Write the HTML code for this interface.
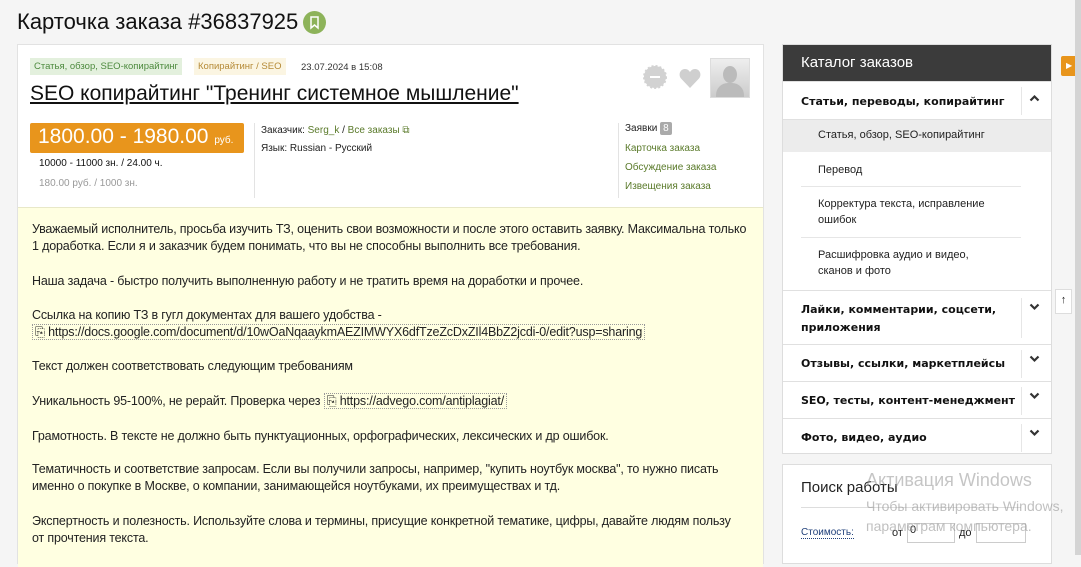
<!DOCTYPE html>
<html><head><meta charset="utf-8"><style>
*{margin:0;padding:0;box-sizing:border-box}
body{width:1081px;height:555px;overflow:hidden;background:#f5f5f5;font-family:"Liberation Sans",sans-serif;color:#222;position:relative}
.a{position:absolute;white-space:nowrap}
h1{position:absolute;left:17px;top:9px;font-size:22px;font-weight:normal;color:#111}
.card{position:absolute;left:17px;top:44px;width:747px;height:520px;background:#fff;border:1px solid #e2e2e2}
.body{position:absolute;left:0;top:162px;width:745px;height:360px;background:#ffffe1;border-top:1px solid #e8e8c8}
.body p{position:absolute;left:14px;font-size:12.5px;line-height:17px;white-space:nowrap;color:#222;letter-spacing:-0.17px}
.lnk{border:1px dotted #999;padding:0 2px}
.side{position:absolute;left:782px;top:44px;width:270px;height:410px;background:#fff;border:1px solid #ddd}
.sh{height:36px;background:#3b3b3b;color:#fff;font-size:15px;padding:9px 0 0 18px}
.row{position:absolute;left:0;width:268px;border-top:1px solid #e0e0e0;font-family:"DejaVu Sans",sans-serif;font-weight:bold;font-size:11px;color:#111}
.row span{position:absolute;left:18px}
.chev{position:absolute;left:246px}
.vs{position:absolute;left:238px;width:1px;background:#e6e6e6}
.sub{position:absolute;left:35px;font-size:11px;line-height:16px;color:#222}
</style></head><body>
<h1>Карточка заказа #36837925</h1>
<div class="a" style="left:303px;top:11px;width:23px;height:23px;border-radius:50%;background:#8db35a"><svg width="23" height="23" viewBox="0 0 23 23" style="position:absolute;left:0;top:0"><path d="M8 6h7v11l-3.5-3-3.5 3z" fill="none" stroke="#fff" stroke-width="1.5"/></svg></div>
<div class="card">
 <div class="a" style="left:12px;top:13px;background:#e3f0dd;color:#4d8a3e;font-size:9.5px;padding:3px 4px;height:17px">Статья, обзор, SEO-копирайтинг</div>
 <div class="a" style="left:176px;top:13px;background:#fbf5e2;color:#b58a36;font-size:9.5px;padding:3px 4px;height:17px">Копирайтинг / SEO</div>
 <div class="a" style="left:283px;top:17px;font-size:9.5px;color:#333">23.07.2024 в 15:08</div>
 <div class="a" style="left:12px;top:37px;font-size:21px;color:#111;text-decoration:underline">SEO копирайтинг "Тренинг системное мышление"</div>
 <svg class="a" style="left:625px;top:20px" width="24" height="24" viewBox="0 0 24 24"><circle cx="12" cy="12" r="11" fill="#d2d2d2" stroke="#d2d2d2" stroke-width="2" stroke-dasharray="2 2"/><rect x="7" y="11" width="10" height="2" fill="#fff"/></svg>
 <svg class="a" style="left:661px;top:24px" width="22" height="19" viewBox="0 0 22 19"><path d="M11 19L2 9.5C-1 6 1 0 6 0c2.5 0 4 1.5 5 3 1-1.5 2.5-3 5-3 5 0 7 6 4 9.5z" fill="#cfcfcf"/></svg>
 <div class="a" style="left:692px;top:13px;width:40px;height:40px;border:1px solid #ddd;background:linear-gradient(#eee,#ccc)"><div style="position:absolute;left:12px;top:7px;width:14px;height:17px;border-radius:50%;background:#bbb"></div><div style="position:absolute;left:5px;top:24px;width:28px;height:14px;border-radius:12px 12px 0 0;background:#bbb"></div></div>
 <div class="a" style="left:12px;top:78px;width:214px;height:30px;background:#e8951c;color:#fff;font-size:21px;padding:2px 0 0 8px;border-radius:2px">1800.00 - 1980.00 <span style="font-size:10px">руб.</span></div>
 <div class="a" style="left:21px;top:113px;font-size:10px;color:#111">10000 - 11000 зн. / 24.00 ч.</div>
 <div class="a" style="left:21px;top:133px;font-size:10px;color:#999">180.00 руб. / 1000 зн.</div>
 <div class="a" style="left:236px;top:78px;width:1px;height:75px;background:#e3e3e3"></div>
 <div class="a" style="left:243px;top:80px;font-size:10px;color:#222">Заказчик: <span style="color:#5a7a2a">Serg_k</span> / <span style="color:#5a7a2a">Все заказы ⧉</span></div>
 <div class="a" style="left:243px;top:98px;font-size:10px;color:#222">Язык: Russian - Русский</div>
 <div class="a" style="left:600px;top:78px;width:1px;height:75px;background:#e3e3e3"></div>
 <div class="a" style="left:607px;top:78px;font-size:10px;color:#222">Заявки <span style="background:#aaa;color:#fff;padding:1px 3px;border-radius:2px">8</span></div>
 <div class="a" style="left:607px;top:98px;font-size:10px;color:#5a7a2a">Карточка заказа</div>
 <div class="a" style="left:607px;top:117px;font-size:10px;color:#5a7a2a">Обсуждение заказа</div>
 <div class="a" style="left:607px;top:136px;font-size:10px;color:#5a7a2a">Извещения заказа</div>
 <div class="body">
  <p style="top:13px">Уважаемый исполнитель, просьба изучить ТЗ, оценить свои возможности и после этого оставить заявку. Максимальна только<br>1 доработка. Если я и заказчик будем понимать, что вы не способны выполнить все требования.</p>
  <p style="top:65px">Наша задача - быстро получить выполненную работу и не тратить время на доработки и прочее.</p>
  <p style="top:99px">Ссылка на копию ТЗ в гугл документах для вашего удобства -<br><span class="lnk">⎘ https://docs.google.com/document/d/10wOaNqaaykmAEZIMWYX6dfTzeZcDxZIl4BbZ2jcdi-0/edit?usp=sharing</span></p>
  <p style="top:150px">Текст должен соответствовать следующим требованиям</p>
  <p style="top:185px">Уникальность 95-100%, не рерайт. Проверка через <span class="lnk">⎘ https://advego.com/antiplagiat/</span></p>
  <p style="top:220px">Грамотность. В тексте не должно быть пунктуационных, орфографических, лексических и др ошибок.</p>
  <p style="top:253px">Тематичность и соответствие запросам. Если вы получили запросы, например, "купить ноутбук москва", то нужно писать<br>именно о покупке в Москве, о компании, занимающейся ноутбуками, их преимуществах и тд.</p>
  <p style="top:305px">Экспертность и полезность. Используйте слова и термины, присущие конкретной тематике, цифры, давайте людям пользу<br>от прочтения текста.</p>
 </div>
</div>
<div class="side">
 <div class="sh">Каталог заказов</div>
 <div class="row" style="top:36px;height:38px"><span style="top:13px">Статьи, переводы, копирайтинг</span><div class="vs" style="top:5px;height:28px"></div><svg class="chev" style="top:12px" width="11" height="8" viewBox="0 0 11 8"><path d="M1.5 6.5l4-4 4 4" fill="none" stroke="#333" stroke-width="2.2"/></svg></div>
 <div class="a" style="left:0;top:74px;width:268px;height:33px;background:#ececec;border-top:1px solid #e0e0e0"></div>
 <div class="sub" style="top:82px">Статья, обзор, SEO-копирайтинг</div>
 <div class="sub" style="top:117px">Перевод</div>
 <div class="a" style="left:18px;top:141px;width:220px;height:1px;background:#e6e6e6"></div>
 <div class="sub" style="top:151px">Корректура текста, исправление<br>ошибок</div>
 <div class="a" style="left:18px;top:192px;width:220px;height:1px;background:#e6e6e6"></div>
 <div class="sub" style="top:202px">Расшифровка аудио и видео,<br>сканов и фото</div>
 <div class="row" style="top:245px;height:55px"><span style="top:10px;line-height:18px">Лайки, комментарии, соцсети,<br>приложения</span><div class="vs" style="top:7px;height:40px"></div><svg class="chev" style="top:12px" width="11" height="8" viewBox="0 0 11 8"><path d="M1.5 1.5l4 4 4-4" fill="none" stroke="#333" stroke-width="2.2"/></svg></div>
 <div class="row" style="top:299px;height:37px"><span style="top:12px">Отзывы, ссылки, маркетплейсы</span><div class="vs" style="top:5px;height:28px"></div><svg class="chev" style="top:10px" width="11" height="8" viewBox="0 0 11 8"><path d="M1.5 1.5l4 4 4-4" fill="none" stroke="#333" stroke-width="2.2"/></svg></div>
 <div class="row" style="top:336px;height:37px"><span style="top:12px">SEO, тесты, контент-менеджмент</span><div class="vs" style="top:5px;height:28px"></div><svg class="chev" style="top:10px" width="11" height="8" viewBox="0 0 11 8"><path d="M1.5 1.5l4 4 4-4" fill="none" stroke="#333" stroke-width="2.2"/></svg></div>
 <div class="row" style="top:373px;height:37px"><span style="top:12px">Фото, видео, аудио</span><div class="vs" style="top:5px;height:28px"></div><svg class="chev" style="top:10px" width="11" height="8" viewBox="0 0 11 8"><path d="M1.5 1.5l4 4 4-4" fill="none" stroke="#333" stroke-width="2.2"/></svg></div>
</div>
<div class="a" style="left:782px;top:464px;width:270px;height:100px;background:#fff;border:1px solid #ddd">
 <div class="a" style="left:18px;top:14px;font-size:15px;color:#222">Поиск работы</div>
 <div class="a" style="left:18px;top:42px;width:220px;height:1px;background:#ddd"></div>
 <div class="a" style="left:18px;top:62px;font-size:10px;color:#1f3f7a;border-bottom:1px dotted #1f3f7a">Стоимость:</div>
 <div class="a" style="left:109px;top:62px;font-size:11px">от</div>
 <div class="a" style="left:124px;top:58px;width:48px;height:20px;border:1px solid #ccc;font-size:11px;padding-left:2px">0</div>
 <div class="a" style="left:176px;top:62px;font-size:11px">до</div>
 <div class="a" style="left:193px;top:58px;width:50px;height:20px;border:1px solid #ccc"></div>
</div>
<div class="a" style="left:866px;top:470px;font-size:18px;color:rgba(150,150,150,.55)">Активация Windows</div>
<div class="a" style="left:866px;top:496px;font-size:14px;color:rgba(150,150,150,.6);line-height:20px">Чтобы активировать Windows,<br>параметрам компьютера.</div>
<div class="a" style="left:1061px;top:56px;width:17px;height:20px;background:#e8951c;border-radius:2px;color:#fff;font-size:8px;padding:5px 0 0 5px">▶</div>
<div class="a" style="left:1055px;top:289px;width:17px;height:25px;border:1px solid #ddd;background:#fff;font-size:11px;text-align:center;padding-top:4px">↑</div>
<div class="a" style="left:1075px;top:0;width:6px;height:555px;background:#d4d4d4"></div>
</body></html>
